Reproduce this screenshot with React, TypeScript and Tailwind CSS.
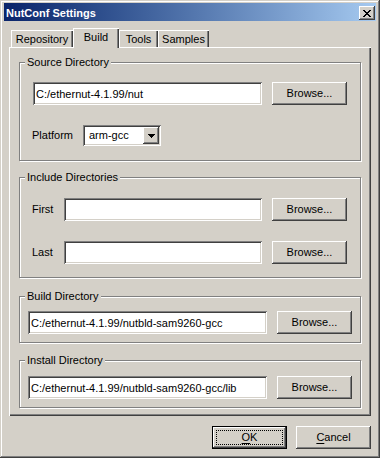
import type { ReactNode } from "react";

const raised =
  "shadow-[inset_-1px_-1px_#404040,inset_1px_1px_#ffffff,inset_-2px_-2px_#808080,inset_2px_2px_#d4d0c8]";
const sunken =
  "shadow-[inset_1px_1px_#808080,inset_-1px_-1px_#ffffff,inset_2px_2px_#404040,inset_-2px_-2px_#d4d0c8]";

function Button({ children, className = "" }: { children: ReactNode; className?: string }) {
  return (
    <button type="button" className={`h-[23px] w-[75px] shrink-0 bg-[#d4d0c8] leading-[13px] ${raised} ${className}`}>
      {children}
    </button>
  );
}

function TextBox({ value = "", className = "" }: { value?: string; className?: string }) {
  return (
    <input
      readOnly
      value={value}
      className={`h-[23px] shrink-0 bg-white pl-[3px] leading-[13px] outline-none ${sunken} ${className}`}
    />
  );
}

function Group({ title, className, children }: { title: string; className: string; children: ReactNode }) {
  return (
    <div className={`relative w-full border border-[#808080] shadow-[inset_1px_1px_#ffffff,1px_1px_#ffffff] ${className}`}>
      <span className="absolute left-[5px] top-[-7px] bg-[#d4d0c8] px-[2px] leading-[13px]">{title}</span>
      {children}
    </div>
  );
}

function Tab({ label, width, selected }: { label: string; width: string; selected?: boolean }) {
  return (
    <div
      className={`${width} ${
        selected ? "relative z-10 mb-[-1px] h-[20px]" : "h-[17px]"
      } shrink-0 bg-[#d4d0c8] pt-[3px] text-center leading-[13px] shadow-[inset_1px_1px_#ffffff,inset_-1px_0_#404040,inset_-2px_0_#808080]`}
    >
      {label}
    </div>
  );
}

export default function App() {
  return (
    <div className="flex h-[458px] w-[380px] flex-col bg-[#d4d0c8] px-[4px] pt-[3px] font-['Liberation_Sans',Arial,sans-serif] text-[11px] text-black shadow-[inset_-1px_-1px_#404040,inset_1px_1px_#d4d0c8,inset_-2px_-2px_#808080,inset_2px_2px_#ffffff]">
      <div className="flex h-[18px] items-start bg-linear-to-r from-[#0a246a] to-[#a6caf0]">
        <span className="pl-[2px] pt-[4px] font-bold leading-[13px] text-white">NutConf Settings</span>
        <button
          type="button"
          className={`ml-auto mr-[1px] mt-[3px] flex h-[14px] w-[16px] items-center justify-center bg-[#d4d0c8] ${raised}`}
        >
          <svg width="8" height="7" viewBox="0 0 8 7" shapeRendering="crispEdges">
            <path
              fill="#000"
              d="M0 0h2v1H0zM6 0h2v1H6zM1 1h2v1H1zM5 1h2v1H5zM2 2h4v1H2zM3 3h2v1H3zM2 4h4v1H2zM1 5h2v1H1zM5 5h2v1H5zM0 6h2v1H0zM6 6h2v1H6z"
            />
          </svg>
        </button>
      </div>

      <div className="ml-[5px] mt-[7px] flex w-[362px] flex-col">
        <div className="flex h-[19px] items-end pl-[2px]">
          <Tab label="Repository" width="w-[62px]" />
          <Tab label="Build" width="w-[46px]" selected />
          <Tab label="Tools" width="w-[39px]" />
          <Tab label="Samples" width="w-[51px]" />
        </div>

        <div className="flex h-[369px] flex-col px-[10px] pt-[15px] shadow-[inset_1px_1px_#ffffff,inset_-1px_-1px_#404040,inset_-2px_-2px_#808080]">
          <Group title="Source Directory" className="h-[99px] pl-[12px] pt-[19px]">
            <div className="flex items-center">
              <TextBox value="C:/ethernut-4.1.99/nut" className="ml-[1px] w-[229px]" />
              <Button className="ml-[10px]">Browse...</Button>
            </div>
            <div className="mt-[20px] flex items-center">
              <span className="w-[51px] leading-[13px]">Platform</span>
              <div className={`flex h-[21px] w-[78px] items-start bg-white ${sunken}`}>
                <span className="flex-1 pl-[6px] pt-[4px] leading-[13px]">arm-gcc</span>
                <div className={`m-[2px] flex h-[17px] w-[16px] items-center justify-center bg-[#d4d0c8] ${raised}`}>
                  <svg width="7" height="4" viewBox="0 0 7 4" shapeRendering="crispEdges">
                    <path fill="#000" d="M0 0h7v1H0zM1 1h5v1H1zM2 2h3v1H2zM3 3h1v1H3z" />
                  </svg>
                </div>
              </div>
            </div>
          </Group>

          <Group title="Include Directories" className="mt-[16px] h-[101px] pl-[12px] pt-[20px]">
            <div className="flex items-center">
              <span className="w-[32px] leading-[13px]">First</span>
              <TextBox className="w-[198px]" />
              <Button className="ml-[10px]">Browse...</Button>
            </div>
            <div className="mt-[20px] flex items-center">
              <span className="w-[32px] leading-[13px]">Last</span>
              <TextBox className="w-[198px]" />
              <Button className="ml-[10px]">Browse...</Button>
            </div>
          </Group>

          <Group title="Build Directory" className="mt-[18px] h-[47px] pl-[8px] pt-[14px]">
            <div className="flex items-center">
              <TextBox value="C:/ethernut-4.1.99/nutbld-sam9260-gcc" className="w-[239px]" />
              <Button className="ml-[10px]">Browse...</Button>
            </div>
          </Group>

          <Group title="Install Directory" className="mt-[17px] h-[48px] pl-[8px] pt-[15px]">
            <div className="flex items-center">
              <TextBox value="C:/ethernut-4.1.99/nutbld-sam9260-gcc/lib" className="w-[239px]" />
              <Button className="ml-[10px]">Browse...</Button>
            </div>
          </Group>
        </div>

        <div className="mt-[10px] flex justify-end gap-[9px]">
          <button
            type="button"
            className="relative h-[23px] w-[75px] border border-black bg-[#d4d0c8] leading-[13px] shadow-[inset_-1px_-1px_#404040,inset_1px_1px_#ffffff,inset_-2px_-2px_#808080,inset_2px_2px_#d4d0c8]"
          >
            <span className="absolute inset-[3px] border border-dotted border-black" />
            <span className="underline underline-offset-2">O</span>K
          </button>
          <Button>
            <span className="underline underline-offset-2">C</span>ancel
          </Button>
        </div>
      </div>
    </div>
  );
}
